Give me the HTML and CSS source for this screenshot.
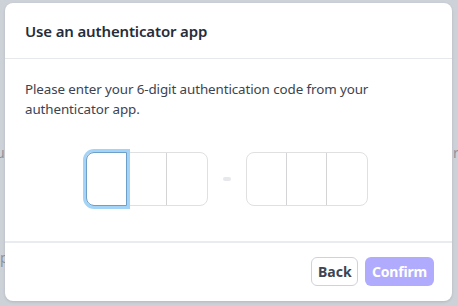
FILE: index.html
```html
<!DOCTYPE html>
<html>
<head>
<meta charset="utf-8">
<link rel="stylesheet" href="styles.css">
</head>
<body>
<div class="backdrop">
  <span class="bg-text bg-u">u</span>
  <span class="bg-text bg-r">r</span>
  <span class="bg-text bg-p">p</span>
</div>
<div class="modal">
  <div class="modal-header">
    <h2 class="title">Use an authenticator app</h2>
  </div>
  <div class="modal-body">
    <p class="desc">Please enter your 6-digit authentication code from your authenticator app.</p>
    <div class="otp">
      <div class="otp-group">
        <div class="cell focused"></div>
        <div class="cell"></div>
        <div class="cell last"></div>
      </div>
      <div class="dash"></div>
      <div class="otp-group">
        <div class="cell"></div>
        <div class="cell"></div>
        <div class="cell last"></div>
      </div>
    </div>
  </div>
  <div class="modal-footer">
    <button class="btn btn-back">Back</button>
    <button class="btn btn-confirm">Confirm</button>
  </div>
</div>
</body>
</html>
```
FILE: styles.css
```css
html, body {
  margin: 0;
  padding: 0;
}
body {
  width: 458px;
  height: 306px;
  background: #cdd1d8;
  font-family: "Noto Sans", "Open Sans", sans-serif;
  overflow: hidden;
  position: relative;
}
.backdrop {
  position: absolute;
  inset: 0;
}
.bg-text {
  position: absolute;
  font-size: 14px;
  color: #8d939c;
}
.bg-u { left: -4px; top: 143px; }
.bg-r { left: 453px; top: 143px; }
.bg-p { left: 0px; top: 248px; }
.modal {
  position: absolute;
  left: 5px;
  top: 3px;
  width: 447px;
  height: 298px;
  background: #fff;
  border-radius: 8px;
  box-shadow: 0 1px 3px rgba(0,0,0,0.12);
  display: flex;
  flex-direction: column;
}
.modal-header {
  height: 55px;
  padding: 0 20px;
  display: flex;
  align-items: center;
  border-bottom: 1px solid #e6e8ec;
}
.title {
  margin: 0;
  font-size: 15px;
  font-weight: 600;
  letter-spacing: -0.15px;
  color: #262d3a;
}
.modal-body {
  flex: 1;
  padding: 20px 24px 0 20px;
  border-bottom: 2px solid #e8ebf0;
}
.desc {
  margin: 0;
  font-size: 13.4px;
  line-height: 20px;
  letter-spacing: -0.1px;
  color: #3c4350;
}
.otp {
  display: flex;
  justify-content: center;
  align-items: center;
  margin-top: 33px;
  gap: 15px;
}
.otp-group {
  display: flex;
  width: 122px;
  height: 54px;
  box-sizing: border-box;
  border: 1px solid #dfe0e2;
  border-radius: 8px;
}
.cell {
  flex: 1;
  border-right: 1px solid #d4d4d6;
  position: relative;
}
.cell.last {
  border-right: none;
}
.cell.focused {
  margin: -1px 0 -1px -1px;
  border: 1px solid #6d9fc8;
  border-radius: 8px 0 0 8px;
  box-shadow: 0 0 0 3px #a3d4f7;
  z-index: 1;
}
.dash {
  width: 8px;
  height: 4px;
  border-radius: 2px;
  background: #e6e8ec;
}
.modal-footer {
  display: flex;
  justify-content: flex-end;
  align-items: flex-start;
  gap: 7px;
  padding: 14px 18px 0;
  height: 58px;
  box-sizing: border-box;
}
.btn {
  height: 29px;
  font-family: inherit;
  font-size: 14px;
  font-weight: 700;
  border-radius: 6px;
  padding: 0 6px;
  cursor: pointer;
}
.btn-back {
  background: #fff;
  border: 1px solid #cfd2d8;
  color: #3e4451;
  width: 47px;
}
.btn-confirm {
  background: #b1abfd;
  border: none;
  color: #fff;
  width: 69px;
  letter-spacing: -0.2px;
}
```
